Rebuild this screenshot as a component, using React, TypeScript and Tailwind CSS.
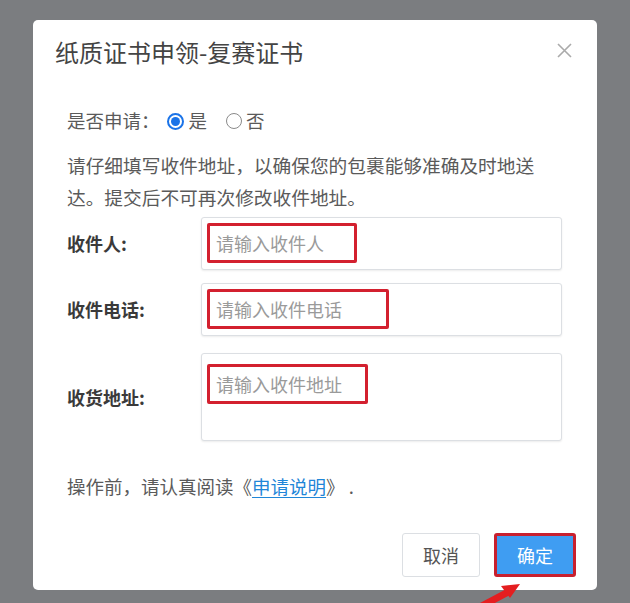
import React from 'react';

const font = "font-['Noto_Sans_CJK_SC','Noto_Sans',sans-serif]";

function Radio({ checked }: { checked?: boolean }) {
  return checked ? (
    <span className="flex h-[17px] w-[17px] items-center justify-center rounded-full border-2 border-[#1a73e8] bg-white">
      <span className="h-[9px] w-[9px] rounded-full bg-[#1a73e8]" />
    </span>
  ) : (
    <span className="h-[16px] w-[16px] rounded-full border border-[#8a8a8a] bg-white" />
  );
}

function Field({
  label,
  placeholder,
  boxWidth,
  tall,
}: {
  label: string;
  placeholder: string;
  boxWidth: string;
  tall?: boolean;
}) {
  return (
    <div className="flex items-center">
      <div className="w-[134px] text-[18px] font-bold text-[#3a3a3a]">{label}</div>
      <div
        className={`w-[361px] rounded-[3px] border border-[#dcdfe3] bg-white pl-[5px] pt-[5px] shadow-[0_1px_2px_rgba(0,0,0,0.08)] ${
          tall ? 'h-[88px] pt-[10px]' : 'h-[53px]'
        }`}
      >
        <div
          className={`flex h-[40px] items-center rounded-[2px] border-[3px] border-[#d3202f] pl-[6px] text-[18px] text-[#9a9a9a] ${boxWidth} ${
            tall ? 'h-[35px]' : ''
          }`}
        >
          {placeholder}
        </div>
      </div>
    </div>
  );
}

export default function App() {
  return (
    <div className={`relative h-[603px] w-[630px] overflow-hidden bg-[#7b7d80] pt-[20px] pl-[33px] ${font}`}>
      <div className="h-[570px] w-[564px] rounded-[5px] bg-white">
        {/* Header */}
        <div className="flex h-[64px] items-center justify-between pl-[22px] pr-[25px]">
          <span className="text-[24px] leading-[32px] text-[#444]">纸质证书申领-复赛证书</span>
          <svg width="15" height="15" viewBox="0 0 15 15" className="-mt-[4px] text-[#aaa]">
            <path d="M1 1 L14 14 M14 1 L1 14" stroke="currentColor" strokeWidth="1.6" />
          </svg>
        </div>

        {/* Body */}
        <div className="px-[34px]">
          <div className="mt-[21px] flex h-[32px] items-center text-[18.5px] text-[#5a5a5a]">
            <span>是否申请：</span>
            <span className="ml-[7px] flex items-center gap-[5px]">
              <Radio checked />
              <span>是</span>
            </span>
            <span className="ml-[19px] flex items-center gap-[4px]">
              <Radio />
              <span>否</span>
            </span>
          </div>

          <p className="mt-[12px] w-[475px] text-[18.7px] leading-[32px] text-[#5a5a5a]">
            请仔细填写收件地址，以确保您的包裹能够准确及时地送
            <br />
            达。提交后不可再次修改收件地址。
          </p>

          <div className="mt-[4px] flex flex-col">
            <Field label="收件人:" placeholder="请输入收件人" boxWidth="w-[150px]" />
            <div className="h-[13px]" />
            <Field label="收件电话:" placeholder="请输入收件电话" boxWidth="w-[182px]" />
            <div className="h-[17px]" />
            <Field label="收货地址:" placeholder="请输入收件地址" boxWidth="w-[161px]" tall />
          </div>

          <p className="mt-[29px] text-[18.5px] leading-[32px] text-[#5a5a5a]">
            操作前，请认真阅读《<span className="text-[#1f86d8] underline underline-offset-[3px]">申请说明</span>》 .
          </p>
        </div>

        {/* Footer */}
        <div className="mt-[31px] flex justify-end gap-[14px] pr-[21px]">
          <button className="h-[44px] w-[78px] rounded-[3px] border border-[#dcdfe3] bg-white text-[18px] text-[#555]">
            取消
          </button>
          <button className="h-[44px] w-[82px] rounded-[3px] border-[3px] border-[#c8202e] bg-[#3f9df2] text-[18px] text-white">
            确定
          </button>
        </div>
      </div>

      {/* Annotation arrow */}
      <svg className="absolute left-[470px] top-[578px]" width="60" height="25" viewBox="0 0 60 25">
        <path d="M8 30 L40 13" stroke="#e41e20" strokeWidth="7" strokeLinecap="round" />
        <path d="M50 6 L31 8 L40 20 Z" fill="#e41e20" />
      </svg>
    </div>
  );
}
